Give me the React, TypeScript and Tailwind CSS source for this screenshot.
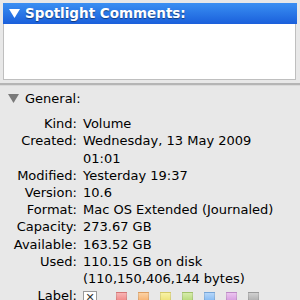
const rows: { label: string; value: React.ReactNode }[] = [
  { label: 'Kind:', value: 'Volume' },
  { label: 'Created:', value: <>Wednesday, 13 May 2009<br />01:01</> },
  { label: 'Modified:', value: 'Yesterday 19:37' },
  { label: 'Version:', value: '10.6' },
  { label: 'Format:', value: 'Mac OS Extended (Journaled)' },
  { label: 'Capacity:', value: '273.67 GB' },
  { label: 'Available:', value: '163.52 GB' },
  { label: 'Used:', value: <>110.15 GB on disk<br />(110,150,406,144 bytes)</> },
];

const swatches = [
  'ml-[19px] from-[#f8b4b4] to-[#ee8282]',
  'ml-[11px] from-[#fcd2a4] to-[#f6ae6a]',
  'ml-[11px] from-[#f8f2a6] to-[#ece070]',
  'ml-[11px] from-[#d6ecaa] to-[#b2d772]',
  'ml-[11px] from-[#b4d6fa] to-[#80b6f0]',
  'ml-[11px] from-[#ecc4f0] to-[#d298dc]',
  'ml-[11px] from-[#d0d0d0] to-[#aaaaaa]',
];

function Triangle({ className }: { className: string }) {
  return (
    <svg width="11" height="9" viewBox="0 0 11 9" className={className}>
      <polygon points="0,0 11,0 5.5,9" fill="currentColor" />
    </svg>
  );
}

export default function App() {
  return (
    <div className="w-[300px] h-[300px] overflow-hidden bg-[#e8e8e8] text-[13px] text-black font-['DejaVu_Sans',sans-serif]">
      {/* Spotlight Comments */}
      <div className="px-[3px] pt-[3px]">
        <div className="h-[21px] flex items-center gap-[5px] pl-[6px] bg-gradient-to-b from-[#3b8ff2] to-[#1b5fdb] text-white font-bold text-[13.5px] leading-[21px] [text-shadow:0_1px_1px_rgba(0,0,0,0.45)]">
          <Triangle className="text-white shrink-0" />
          <span>Spotlight Comments:</span>
        </div>
        <div className="h-[56px] mr-[1px] bg-white border border-t-0 border-[#bfbfbf]" />
      </div>

      {/* divider */}
      <div className="mt-[3px] h-[2px] bg-[#b5b5b5]" />
      <div className="h-[1px] bg-[#dadada]" />

      {/* General */}
      <div className="mt-[4px] flex items-center gap-[6px] pl-[8px] leading-[17.2px]">
        <Triangle className="text-[#7a7a7a] shrink-0" />
        <span>General:</span>
      </div>

      <div className="mt-[8px] grid grid-cols-[77px_1fr] gap-x-[6px] leading-[17.2px]">
        {rows.map((r) => (
          <div key={r.label} className="contents">
            <div className="text-right">{r.label}</div>
            <div className="whitespace-nowrap">{r.value}</div>
          </div>
        ))}
        <div className="text-right">Label:</div>
        <div className="flex items-center h-[17.2px] mt-[2px]">
          <div className="w-[14px] h-[14px] shrink-0 bg-white border border-[#9a9a9a] flex items-center justify-center text-[11px] leading-none text-[#333]">
            ✕
          </div>
          {swatches.map((s, i) => (
            <div key={i} className={`w-[11px] h-[11px] shrink-0 bg-gradient-to-b border border-black/10 ${s}`} />
          ))}
        </div>
      </div>
    </div>
  );
}
